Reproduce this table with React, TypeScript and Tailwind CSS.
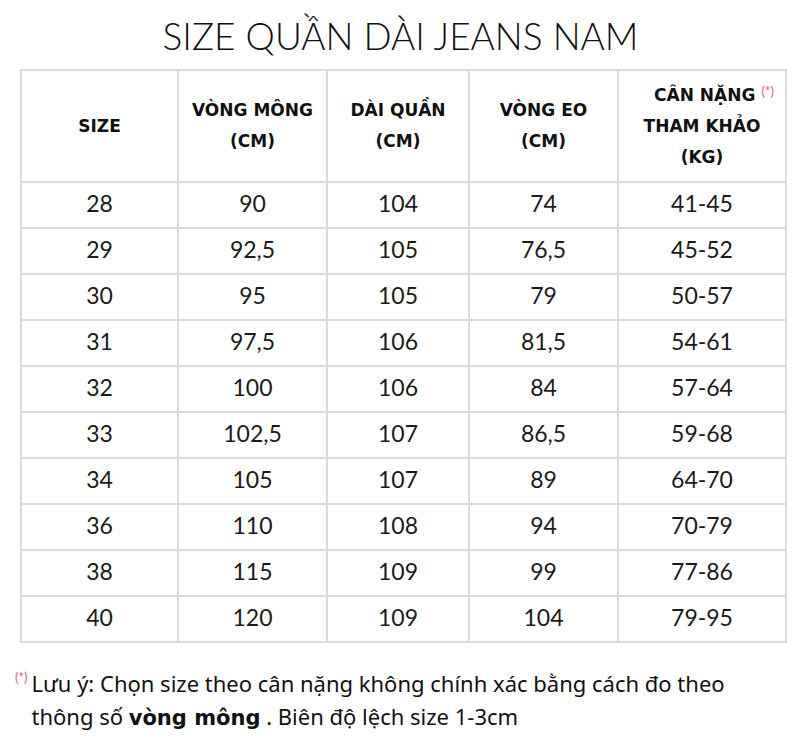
const rows = [
  ["28", "90", "104", "74", "41-45"],
  ["29", "92,5", "105", "76,5", "45-52"],
  ["30", "95", "105", "79", "50-57"],
  ["31", "97,5", "106", "81,5", "54-61"],
  ["32", "100", "106", "84", "57-64"],
  ["33", "102,5", "107", "86,5", "59-68"],
  ["34", "105", "107", "89", "64-70"],
  ["36", "110", "108", "94", "70-79"],
  ["38", "115", "109", "99", "77-86"],
  ["40", "120", "109", "104", "79-95"],
];

const Star = ({ className = "" }: { className?: string }) => (
  <span className={`text-[#e0607e] font-['Lato',sans-serif] font-normal ${className}`}>(*)</span>
);

export default function App() {
  const th =
    "border-2 border-[#dadada] font-['DejaVu_Sans',sans-serif] font-bold text-[17px] leading-[31px] text-[#111] text-center align-middle";
  const td =
    "border-2 border-[#dadada] font-['Lato',sans-serif] text-[23px] text-[#1a1a1a] text-center align-middle h-[46px]";

  return (
    <div className="w-[801px] h-[745px] bg-white overflow-hidden">
      <h1 className="pt-[11px] text-center font-['Lato',sans-serif] font-light text-[37px] leading-[49px] text-[#111]">
        SIZE QUẦN DÀI JEANS NAM
      </h1>

      <table className="mt-[9px] ml-[20px] w-[765px] table-fixed border-collapse">
        <colgroup>
          <col className="w-[157px]" />
          <col className="w-[149px]" />
          <col className="w-[142px]" />
          <col className="w-[149px]" />
          <col className="w-[168px]" />
        </colgroup>
        <thead>
          <tr className="h-[112px]">
            <th className={th}>SIZE</th>
            <th className={th}>
              VÒNG MÔNG
              <br />
              (CM)
            </th>
            <th className={th}>
              DÀI QUẦN
              <br />
              (CM)
            </th>
            <th className={th}>
              VÒNG EO
              <br />
              (CM)
            </th>
            <th className={th}>
              <span className="pl-[24px]">CÂN NẶNG</span>
              <Star className="ml-[6px] text-[13px] align-top leading-[22px]" />
              <br />
              THAM KHẢO
              <br />
              (KG)
            </th>
          </tr>
        </thead>
        <tbody>
          {rows.map((r) => (
            <tr key={r[0]}>
              {r.map((c, i) => (
                <td key={i} className={`${td} pb-[3px]`}>
                  {c}
                </td>
              ))}
            </tr>
          ))}
        </tbody>
      </table>

      <div className="mt-[24px] ml-[15px] flex items-start font-['Noto_Sans',sans-serif] text-[22px] leading-[33px] text-[#111]">
        <Star className="text-[13px] leading-[20px] mr-[4px]" />
        <p>
          Lưu ý: Chọn size theo cân nặng không chính xác bằng cách đo theo
          <br />
          thông số <span className="font-['DejaVu_Sans',sans-serif] font-bold text-[21px]">vòng mông</span> . Biên độ lệch size 1-3cm
        </p>
      </div>
    </div>
  );
}
